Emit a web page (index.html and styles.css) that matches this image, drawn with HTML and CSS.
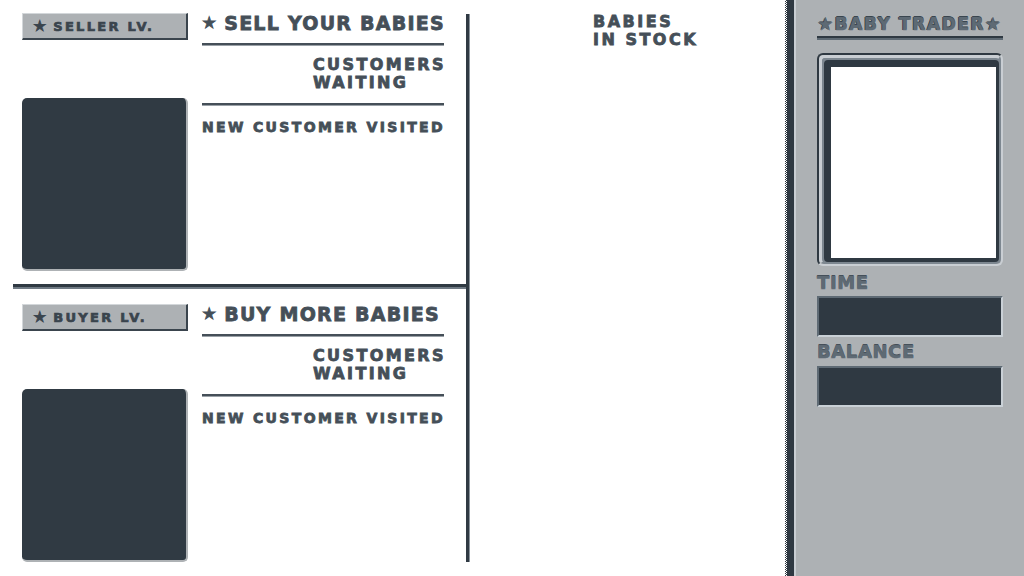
FILE: index.html
```html
<!DOCTYPE html>
<html lang="en">
<head>
    <meta charset="UTF-8">
    <meta name="viewport" content="width=device-width, initial-scale=1.0">
    <title>Baby Trader</title>
    <link rel="stylesheet" href="styles.css">
</head>
<body>
    <div class="screen">
        <div class="trade-col">
            <section class="trade">
                <div class="trade-side">
                    <div class="level-badge"><span class="star">★</span> SELLER LV.</div>
                    <div class="queue-box"></div>
                </div>
                <div class="trade-info">
                    <h2 class="trade-title"><span class="star">★</span> SELL YOUR BABIES</h2>
                    <div class="rule"></div>
                    <div class="waiting">CUSTOMERS<br>WAITING</div>
                    <div class="rule rule-low"></div>
                    <div class="visited">NEW CUSTOMER VISITED</div>
                </div>
            </section>

            <div class="divider"></div>

            <section class="trade trade-buy">
                <div class="trade-side">
                    <div class="level-badge"><span class="star">★</span> BUYER LV.</div>
                    <div class="queue-box"></div>
                </div>
                <div class="trade-info">
                    <h2 class="trade-title"><span class="star">★</span> BUY MORE BABIES</h2>
                    <div class="rule"></div>
                    <div class="waiting">CUSTOMERS<br>WAITING</div>
                    <div class="rule rule-low"></div>
                    <div class="visited">NEW CUSTOMER VISITED</div>
                </div>
            </section>
        </div>

        <div class="rule-v"></div>

        <div class="stock">
            <div class="stock-title">BABIES<br>IN STOCK</div>
        </div>

        <aside class="panel">
            <h1 class="panel-title">★BABY TRADER★</h1>
            <div class="panel-rule"></div>
            <div class="frame">
                <div class="frame-bevel">
                    <div class="frame-screen"></div>
                </div>
            </div>
            <div class="stat-label">TIME</div>
            <div class="stat-box"></div>
            <div class="stat-label stat-label-2">BALANCE</div>
            <div class="stat-box"></div>
        </aside>
    </div>
</body>
</html>
```

FILE: styles.css
```css
* {
    box-sizing: border-box;
}

body {
    margin: 0;
    background: #fff;
    font-family: "DejaVu Sans", "Liberation Sans", sans-serif;
    font-weight: bold;
    color: #454f58;
    -webkit-text-stroke: 0.8px #454f58;
    overflow: hidden;
}

h1, h2 {
    margin: 0;
    font-size: inherit;
}

.screen {
    display: flex;
    width: 1024px;
    height: 576px;
}

/* left: sell / buy blocks */
.trade-col {
    width: 466px;
    flex: none;
    display: flex;
    flex-direction: column;
}

.trade {
    height: 284px;
    display: flex;
    padding: 10px 0 0 22px;
}

.trade-buy {
    margin-top: 2px;
    flex: 1;
}

.trade-side {
    width: 166px;
    flex: none;
}

.level-badge {
    margin-top: 3px;
    height: 27px;
    background: #adb1b4;
    border: 1px solid #d3d7da;
    border-right: 2px solid #3a444d;
    border-bottom: 2px solid #3a444d;
    padding-left: 10px;
    font-size: 13px;
    line-height: 24px;
    letter-spacing: 2.3px;
    color: #3a444d;
    -webkit-text-stroke: 0.7px #3a444d;
}

.level-badge .star {
    font-size: 15px;
    letter-spacing: 0;
}

.queue-box {
    margin-top: 58px;
    height: 173px;
    background: #303a43;
    border-right: 2px solid #aeb2b5;
    border-bottom: 2px solid #aeb2b5;
    border-radius: 5px;
}

.trade-info {
    width: 242px;
    margin-left: 14px;
}

.trade-title {
    margin-top: 2px;
    font-size: 19px;
    line-height: 22px;
    letter-spacing: 1.25px;
    white-space: nowrap;
}

.trade-title .star {
    font-size: 16px;
    letter-spacing: 0;
    vertical-align: 2px;
}

.rule {
    margin-top: 9px;
    height: 3px;
    border-top: 2px solid #454f58;
    border-bottom: 1px solid #9aa1a7;
}

.rule-low {
    margin-top: 11px;
}

.waiting {
    width: fit-content;
    margin: 10px -2px 0 auto;
    font-size: 16px;
    line-height: 18px;
    letter-spacing: 2.4px;
}

.visited {
    margin-top: 13px;
    font-size: 14px;
    line-height: 16px;
    letter-spacing: 2.35px;
    white-space: nowrap;
}

.divider {
    margin-left: 13px;
    height: 5px;
    border-top: 3px solid #303a43;
    border-bottom: 2px solid #6f7a84;
}

.rule-v {
    width: 4px;
    flex: none;
    margin: 14px 0;
    border-left: 3px solid #303a43;
    border-right: 1px solid #8a939b;
}

/* middle: stock */
.stock {
    flex: 1;
    padding: 13px 0 0 123px;
}

.stock-title {
    font-size: 16px;
    line-height: 18px;
    letter-spacing: 2.5px;
}

/* right: trader panel */
.panel {
    width: 239px;
    flex: none;
    padding: 14px 21px 0 32px;
    background:
        linear-gradient(to right, transparent 2px, #2f3942 2px 9px, #c9ced3 9px 11px, transparent 11px),
        repeating-conic-gradient(#2f3942 0 25%, #fff 0 50%) 0 0 / 2px 2px repeat-y;
    background-color: #adb1b4;
}

.panel-title {
    font-size: 17px;
    line-height: 20px;
    letter-spacing: 1.6px;
    text-align: center;
    white-space: nowrap;
    color: #5e6a74;
    -webkit-text-stroke: 0.5px #5e6a74;
    text-shadow: -1px 0 #2f3942, 0 -1px #2f3942;
}

.panel-rule {
    margin-top: 2px;
    height: 4px;
    border-top: 2px solid #2f3942;
    border-bottom: 2px solid #5e6a74;
}

.frame {
    margin-top: 13px;
    height: 213px;
    display: flex;
    border: 2px solid;
    border-color: #2f3942 #c9ced3 #c9ced3 #2f3942;
    border-radius: 6px;
}

.frame-bevel {
    flex: 1;
    display: flex;
    border: 2px solid;
    border-color: #c9ced3 #7d8790 #7d8790 #c9ced3;
    border-left-width: 3px;
    border-top-width: 3px;
    border-radius: 5px;
    background: #7d8790;
    padding: 2px 0 0 2px;
}

.frame-screen {
    flex: 1;
    background: #fff;
    border: solid #2f3942;
    border-width: 7px 3px 4px 7px;
    border-radius: 4px;
}

.stat-label {
    margin-top: 7px;
    font-size: 18px;
    line-height: 20px;
    letter-spacing: 0.6px;
    color: #5e6a74;
    -webkit-text-stroke: 0.6px #5e6a74;
    text-shadow: 0 -1px #3d4750;
}

.stat-label-2 {
    margin-top: 5px;
}

.stat-box {
    margin-top: 3px;
    height: 41px;
    background: #2f3942;
    border: 2px solid;
    border-color: #5e6a74 #c9d0d6 #c9d0d6 #5e6a74;
}

.stat-label-2 + .stat-box {
    margin-top: 4px;
}
```
